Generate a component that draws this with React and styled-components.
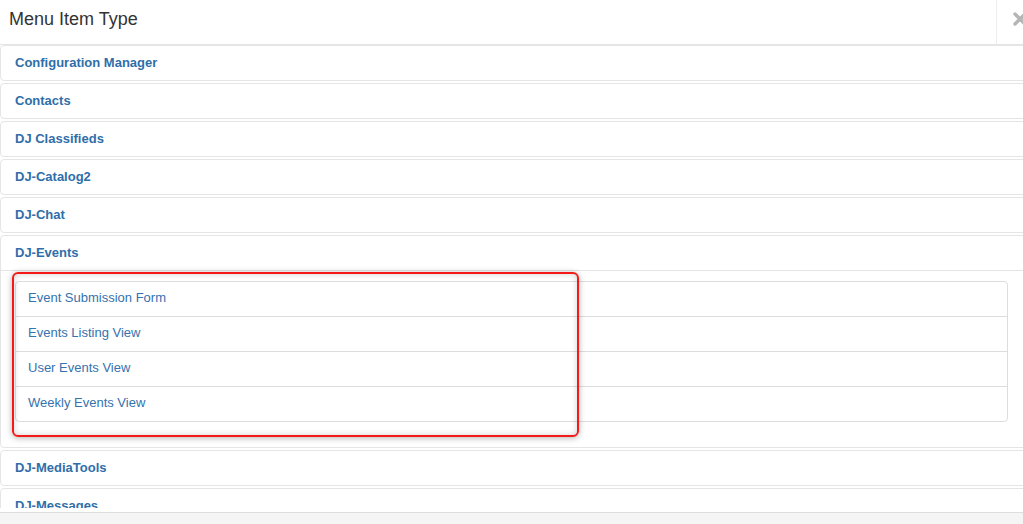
import React from "react";
import styled, { createGlobalStyle } from "styled-components";

const GlobalStyle = createGlobalStyle`
  html, body {
    margin: 0;
    padding: 0;
    background: #fff;
  }
  body {
    font-family: "Liberation Sans", Arial, sans-serif;
    color: #333;
  }
`;

const components = [
  "Configuration Manager",
  "Contacts",
  "DJ Classifieds",
  "DJ-Catalog2",
  "DJ-Chat",
  "DJ-Events",
  "DJ-MediaTools",
  "DJ-Messages",
];

const eventViews = [
  "Event Submission Form",
  "Events Listing View",
  "User Events View",
  "Weekly Events View",
];

const App = () => {
  return (
    <>
      <GlobalStyle />
      <Modal>
        <Header>
          <Title>Menu Item Type</Title>
          <Close aria-label="close">
            <svg width="14" height="14" viewBox="0 0 14 14">
              <path
                d="M2 2 L12 12 M12 2 L2 12"
                stroke="#b5b5b5"
                strokeWidth="3.4"
                strokeLinecap="round"
              />
            </svg>
          </Close>
        </Header>
        <Body>
          {components.map((name) => {
            const open = name === "DJ-Events";
            return (
              <Group key={name}>
                <Toggle>{name}</Toggle>
                {open && (
                  <>
                    <Inner>
                      <List>
                        {eventViews.map((v) => (
                          <Item key={v}>
                            <a href="#">{v}</a>
                          </Item>
                        ))}
                      </List>
                    </Inner>
                    <Highlight />
                  </>
                )}
              </Group>
            );
          })}
        </Body>
        <Footer />
      </Modal>
    </>
  );
};

const Modal = styled.div`
  height: 524px;
  overflow: hidden;
  display: flex;
  flex-direction: column;
`;

const Header = styled.div`
  display: flex;
  height: 44px;
  border-bottom: 1px solid #e5e5e5;
  flex: none;
  overflow: hidden;
`;

const Title = styled.h3`
  flex: 1;
  margin: 0;
  padding: 8px 9px 0;
  font-size: 18px;
  font-weight: normal;
  line-height: 22px;
  color: #333;
`;

const Close = styled.div`
  width: 27px;
  border-left: 1px solid #eee;
  padding: 12px 0 0 16px;
  box-sizing: border-box;
  flex: none;
  overflow: visible;
  white-space: nowrap;
`;

const Body = styled.div`
  height: 463px;
  flex: none;
  overflow: hidden;
`;

const Group = styled.div`
  position: relative;
  border: 1px solid #e5e5e5;
  border-radius: 4px;
  margin: 0 -6px 2px 0;
`;

const Toggle = styled.a`
  display: block;
  padding: 8px 14px;
  font-size: 13px;
  font-weight: bold;
  line-height: 18px;
  color: #2f6ea9;
  text-decoration: none;
`;

const Inner = styled.div`
  border-top: 1px solid #e5e5e5;
  padding: 10px 20px 9px 14px;
`;

const List = styled.ul`
  list-style: none;
  margin: 0 0 16px;
  padding: 0;
  border: 1px solid #ddd;
  border-radius: 4px;
`;

const Item = styled.li`
  border-top: 1px solid #ddd;
  &:first-child {
    border-top: none;
  }
  a {
    display: block;
    padding: 7px 12px 9px;
    font-size: 13px;
    line-height: 18px;
    color: #3572ae;
    text-decoration: none;
  }
`;

const Highlight = styled.div`
  position: absolute;
  left: 11px;
  top: 36px;
  width: 567px;
  height: 165px;
  box-sizing: border-box;
  border: 2px solid #f41a1a;
  border-radius: 6px;
  box-shadow: 0 1px 6px rgba(0, 0, 0, 0.3), inset 0 0 6px rgba(0, 0, 0, 0.18);
  pointer-events: none;
`;

const Footer = styled.div`
  flex: none;
  height: 60px;
  margin-top: 4px;
  background: #f5f5f5;
  border-top: 1px solid #ddd;
`;

export default App;
